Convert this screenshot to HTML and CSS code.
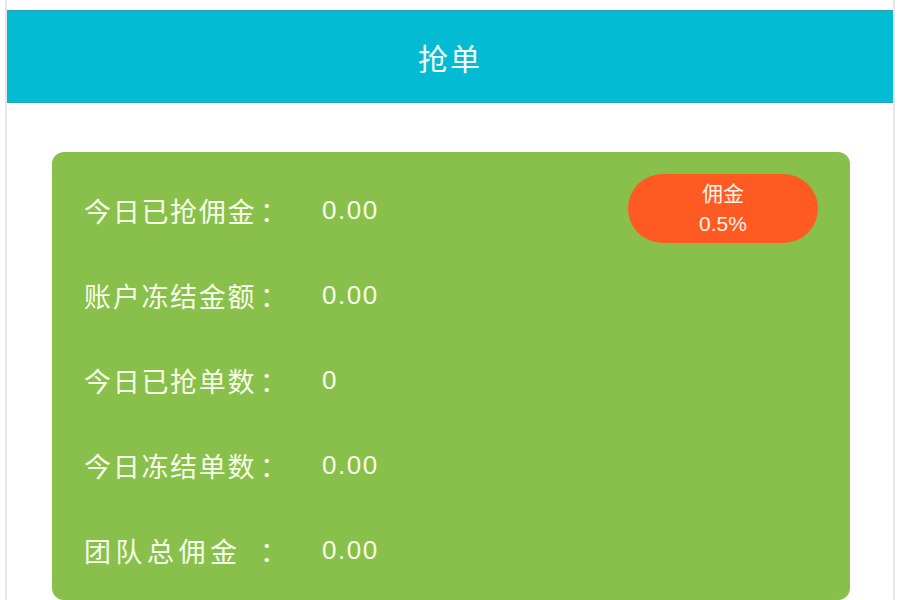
FILE: index.html
```html
<!DOCTYPE html>
<html lang="zh-CN">
<head>
<meta charset="utf-8">
<title>抢单</title>
<link rel="stylesheet" href="styles.css">
</head>
<body>
<div class="page">
  <header class="header">抢单</header>
  <section class="card">
    <div class="badge">
      <span class="badge-title">佣金</span>
      <span class="badge-rate">0.5%</span>
    </div>
    <div class="row"><span class="name">今日已抢佣金</span><span class="colon">：</span><span class="value">0.00</span></div>
    <div class="row"><span class="name">账户冻结金额</span><span class="colon">：</span><span class="value">0.00</span></div>
    <div class="row"><span class="name">今日已抢单数</span><span class="colon">：</span><span class="value">0</span></div>
    <div class="row"><span class="name">今日冻结单数</span><span class="colon">：</span><span class="value">0.00</span></div>
    <div class="row"><span class="name name-wide">团队总佣金</span><span class="colon">：</span><span class="value">0.00</span></div>
  </section>
</div>
</body>
</html>
```

FILE: styles.css
```css
html, body {
  margin: 0;
  padding: 0;
  background: #ffffff;
  font-family: "Liberation Sans", "Noto Sans CJK SC", sans-serif;
  color: #ffffff;
  overflow: hidden;
}

.page {
  margin: 0 5px;
  border-left: 2px solid #e6e6e6;
  border-right: 2px solid #e6e6e6;
  padding-top: 10px;
  height: 590px;
}

.header {
  height: 93px;
  background: #03bbd3;
  box-shadow: inset 0 1px 0 #2a9fb0, inset 0 -1px 0 #2a9fb0;
  display: flex;
  align-items: center;
  justify-content: center;
  font-size: 30px;
  letter-spacing: 2px;
  color: #f4fdff;
}

.card {
  position: relative;
  margin: 49px 43px 0 45px;
  background: #89c04b;
  border-radius: 12px;
  padding: 16px 32px 0;
  height: 432px;
}

.badge {
  position: absolute;
  top: 22px;
  right: 32px;
  width: 190px;
  height: 69px;
  border-radius: 35px;
  background: #ff5a22;
  display: flex;
  flex-direction: column;
  align-items: center;
  justify-content: center;
  font-size: 21px;
  line-height: 30px;
  color: #fff4ea;
}

.row {
  display: grid;
  grid-template-columns: 176px 62px auto;
  align-items: center;
  height: 85px;
  font-size: 27px;
  color: #f6fde8;
}

.name {
  letter-spacing: 1.7px;
  white-space: nowrap;
}

.name-wide {
  letter-spacing: 4.5px;
}

.value {
  font-size: 26px;
  letter-spacing: 1.5px;
}
```
